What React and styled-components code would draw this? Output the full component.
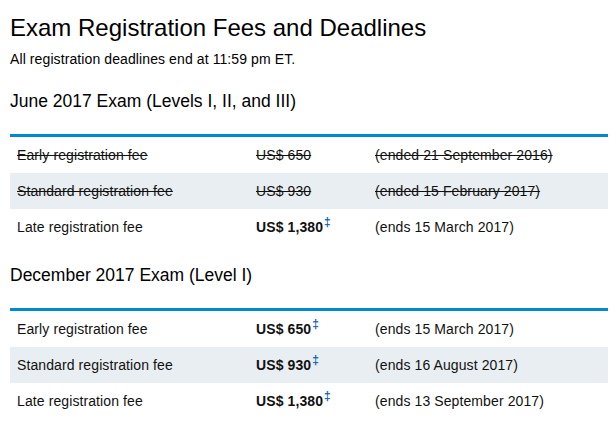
import styled, { createGlobalStyle } from "styled-components";

const GlobalStyle = createGlobalStyle`
  html, body {
    margin: 0;
    padding: 0;
    background: #fff;
  }
  body {
    font-family: "Liberation Sans", Arial, sans-serif;
    color: #000;
  }
`;

const Page = styled.div`
  width: 598px;
  padding: 0 7px 0 10px;
`;

const Title = styled.h1`
  font-size: 24px;
  font-weight: normal;
  margin: 0;
  padding-top: 14px;
  line-height: 28px;
`;

const Note = styled.p`
  font-size: 14px;
  letter-spacing: 0.1px;
  margin: 9px 0 0 0;
  line-height: 16px;
`;

const ExamTitle = styled.h2`
  font-size: 17.5px;
  font-weight: normal;
  margin: 0;
  line-height: 22px;
  padding-top: ${(p) => p.$top}px;
  padding-bottom: 22px;
`;

const Table = styled.div`
  border-top: 3px solid #0088d1;
`;

const Row = styled.div`
  display: grid;
  grid-template-columns: 239px 119px 1fr;
  align-items: center;
  height: 36px;
  padding-left: 7px;
  font-size: 14px;
  letter-spacing: 0.1px;
  background: ${(p) => (p.$shade ? "#e9eef2" : "transparent")};
  text-decoration: ${(p) => (p.$past ? "line-through" : "none")};
  color: #111;
`;

const Price = styled.span`
  font-weight: ${(p) => (p.$past ? "normal" : "bold")};
`;

const Dagger = styled.sup`
  color: #1565b0;
  font-weight: bold;
  font-size: 12px;
  line-height: 0;
  margin-left: 1px;
`;

const exams = [
  {
    title: "June 2017 Exam (Levels I, II, and III)",
    top: 23,
    rows: [
      ["Early registration fee", "US$ 650", "(ended 21 September 2016)", true],
      ["Standard registration fee", "US$ 930", "(ended 15 February 2017)", true],
      ["Late registration fee", "US$ 1,380", "(ends 15 March 2017)", false],
    ],
  },
  {
    title: "December 2017 Exam (Level I)",
    top: 19,
    rows: [
      ["Early registration fee", "US$ 650", "(ends 15 March 2017)", false],
      ["Standard registration fee", "US$ 930", "(ends 16 August 2017)", false],
      ["Late registration fee", "US$ 1,380", "(ends 13 September 2017)", false],
    ],
  },
];

const App = () => {
  return (
    <Page>
      <GlobalStyle />
      <Title>Exam Registration Fees and Deadlines</Title>
      <Note>All registration deadlines end at 11:59 pm ET.</Note>
      {exams.map((exam) => (
        <div key={exam.title}>
          <ExamTitle $top={exam.top}>{exam.title}</ExamTitle>
          <Table>
            {exam.rows.map(([label, price, date, past], i) => (
              <Row key={label} $shade={i === 1} $past={past}>
                <span>{label}</span>
                <Price $past={past}>
                  {price}
                  {!past && <Dagger>‡</Dagger>}
                </Price>
                <span>{date}</span>
              </Row>
            ))}
          </Table>
        </div>
      ))}
    </Page>
  );
};

export default App;
